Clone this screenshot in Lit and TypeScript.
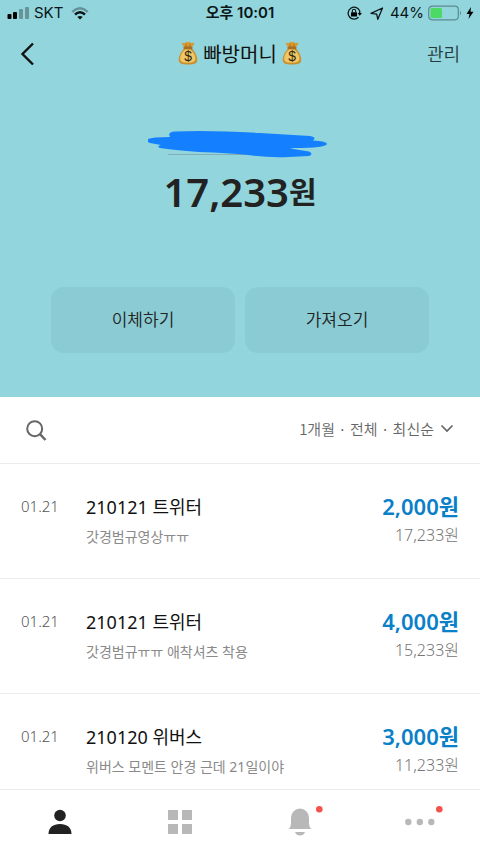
import { LitElement, html, css, svg } from "lit";
import { customElement, property } from "lit/decorators.js";

interface Entry {
  date: string;
  title: string;
  memo: string;
  amount: string;
  balance: string;
}

const entries: Entry[] = [
  { date: "01.21", title: "210121 트위터", memo: "갓경범규영상ㅠㅠ", amount: "2,000원", balance: "17,233원" },
  { date: "01.21", title: "210121 트위터", memo: "갓경범규ㅠㅠ 애착셔츠 착용", amount: "4,000원", balance: "15,233원" },
  { date: "01.21", title: "210120 위버스", memo: "위버스 모멘트 안경 근데 21일이야", amount: "3,000원", balance: "11,233원" },
];

const moneyBag = html`<svg class="bag" width="22" height="24" viewBox="0 0 22 26" aria-hidden="true">
  <path d="M7 7 4 2.500Q6 1.500 7.500 2.500 9-.2 11 1.500 13-.2 14.500 2.500 16.500 1 18 3L15 7Z" fill="#d59a32" />
  <path d="M8.500 3 9.500 7M13.500 3 12.500 7" stroke="#a8701c" stroke-width="1" />
  <path d="M7 8C4 11 1 15 1 20.500 1 24 4 25.500 11 25.500S21 24 21 20.500C21 15 18 11 15 8Z" fill="#c98f30" />
  <path d="M8 9C5 12 2.500 15 2.500 19.500 2.500 23 6 23.500 11 23.500S19 22.500 19 19C19 15 16 11 13 9Z" fill="#efc765" />
  <rect x="6" y="6" width="10" height="3" rx="1.500" fill="#a96d24" />
  <text x="11" y="22" text-anchor="middle" font-family="Liberation Sans, sans-serif" font-size="15" fill="#2f240e">$</text>
</svg>`;

@customElement("status-bar")
class StatusBar extends LitElement {
  static styles = css`
    :host {
      display: grid;
      grid-template-columns: 1fr auto 1fr;
      align-items: center;
      height: 26px;
      padding: 0 6px;
      font: 400 15px/26px Inter, "Noto Sans CJK KR", sans-serif;
      color: #0b1517;
    }
    .group { display: flex; align-items: center; gap: 4px; }
    .end { justify-content: flex-end; }
    .wifi { margin-left: 4px; }
    .time { font-weight: 600; }
    svg { display: block; flex: none; }
  `;
  render() {
    return html`
      <div class="group">
        <svg width="24" height="14" viewBox="0 0 24 14" aria-hidden="true">
          <rect x="1.500" y="8" width="4" height="5" rx="1" />
          <rect x="7" y="6" width="4" height="7" rx="1" />
          <rect x="13" y="3" width="4" height="10" rx="1" opacity=".3" />
          <rect x="19" y="1" width="4" height="12" rx="1" opacity=".3" />
        </svg>
        <span>SKT</span>
        <svg class="wifi" width="18" height="13" viewBox="0 0 18 13" fill="none" stroke="#0b1517" aria-hidden="true">
          <path d="M1.200 5Q9-2.500 16.800 5" stroke-width="2.400" opacity=".35" />
          <path d="M4 7.500Q9 3 14 7.500" stroke-width="2.400" />
          <path d="M6.300 10Q9 7.800 11.700 10L9 12.600Z" fill="#0b1517" stroke="none" />
        </svg>
      </div>
      <span class="time">오후 10:01</span>
      <div class="group end">
        <svg width="15" height="14" viewBox="0 0 15 14" aria-hidden="true">
          <path d="M12.500 4.500A6 6 0 1 0 11.500 11.300M12.700 4.500V8" fill="none" stroke="#0b1517" stroke-width="1.300" />
          <path d="M10.500 7H15L12.700 9.700Z" />
          <rect x="4" y="6.200" width="6" height="4.300" rx=".6" />
          <path d="M5.300 6.500V5a1.700 1.700 0 0 1 3.400 0V6.500" fill="none" stroke="#0b1517" stroke-width="1.100" />
        </svg>
        <svg width="20" height="13" viewBox="0 0 20 13" aria-hidden="true">
          <path d="M5 6.300 16.500 1 11.800 12.300 10.700 7.200Z" fill="none" stroke="#0b1517" stroke-width="1.300" stroke-linejoin="round" />
        </svg>
        <span>44%</span>
        <svg width="34" height="16" viewBox="0 0 34 16" aria-hidden="true">
          <rect x=".7" y="1.200" width="29.600" height="13.600" rx="3.500" fill="none" stroke="#5c8a90" stroke-width="1.200" />
          <rect x="2.500" y="3" width="11.500" height="10" rx="1.500" fill="#4cd964" />
          <path d="M32 5.500Q34 8 32 10.500Z" fill="#5c8a90" />
        </svg>
        <svg width="8" height="12" viewBox="0 0 8 12" aria-hidden="true"><path d="M5 0 .5 7H3.500L2.500 12 7.500 4.700H4.500Z" /></svg>
      </div>
    `;
  }
}

@customElement("entry-row")
class EntryRow extends LitElement {
  @property({ attribute: false }) entry!: Entry;
  static styles = css`
    :host {
      display: grid;
      grid-template-columns: 65px 1fr auto;
      padding: 28px 21px 26px;
      border-top: 1px solid #ececec;
      line-height: 30px;
      color: #757575;
    }
    .date { font-size: 15px; font-weight: 300; line-height: 28px; color: #555; }
    .title { font-size: 18px; color: #111; }
    .memo { font-size: 14px; color: #8a8a8a; }
    .money { text-align: right; line-height: 29px; }
    .amount { font-size: 22px; font-weight: 600; color: #0a80c8; }
    .balance { font-size: 16px; font-weight: 300; }
  `;
  render() {
    const e = this.entry;
    return html`
      <span class="date">${e.date}</span>
      <div>
        <div class="title">${e.title}</div>
        <div class="memo">${e.memo}</div>
      </div>
      <div class="money">
        <div class="amount">${e.amount}</div>
        <div class="balance">${e.balance}</div>
      </div>
    `;
  }
}

@customElement("tab-bar")
class TabBar extends LitElement {
  static styles = css`
    nav {
      display: grid;
      grid-template-columns: repeat(4, 1fr);
      height: 64px;
      border-top: 1px solid #ebebeb;
      background: #fff;
    }
    button {
      display: grid;
      place-items: center;
      padding: 0;
      border: 0;
      background: none;
      color: #b8b8b8;
    }
    .active { color: #222; }
  `;
  private tab(label: string, shape: unknown, active = false) {
    return html`<button class=${active ? "active" : ""} aria-label=${label}>
      <svg width="48" height="36" viewBox="0 0 48 36" fill="currentColor">${shape}</svg>
    </button>`;
  }
  render() {
    const dot = svg`<circle cx="43.300" cy="5.300" r="3.300" fill="#f5544c" />`;
    return html`<nav>
      ${this.tab("홈", svg`<circle cx="24" cy="11.500" r="5.800" /><path d="M12.500 30C12.500 23.500 17 20 24 20S35.500 23.500 35.500 30Z" />`, true)}
      ${this.tab("서비스", svg`<path d="M12 6h10v10H12zM26 6h10v10H26zM12 20h10v10H12zM26 20h10v10H26z" />`)}
      ${this.tab("알림", svg`<path d="M12.700 25Q15 22.500 15 20V13.500A9 9 0 0 1 33 13.500V20Q33 22.500 35.300 25ZM19 28H29Q27.500 31.500 24 31.500T19 28Z" />${dot}`)}
      ${this.tab("더보기", svg`<circle cx="12.300" cy="18" r="3.200" /><circle cx="23.800" cy="18" r="3.200" /><circle cx="35.300" cy="18" r="3.200" />${dot}`)}
    </nav>`;
  }
}

@customElement("app-root")
class AppRoot extends LitElement {
  static styles = css`
    :host {
      display: flex;
      flex-direction: column;
      height: 100vh;
      background: #fff;
      font-family: "Noto Sans", "Noto Sans CJK KR", sans-serif;
      color: #222;
    }
    button {
      padding: 0;
      border: 0;
      background: none;
      font: inherit;
      color: inherit;
    }
    svg { display: block; flex: none; }
    main {
      flex: 1;
      min-height: 0;
      overflow-y: auto;
      scrollbar-width: none;
    }
    .hero { background: #92d5dc; }
    .bar {
      display: grid;
      grid-template-columns: 1fr auto 1fr;
      align-items: center;
      height: 56px;
      padding: 0 20px;
    }
    .back { justify-self: start; }
    .manage { justify-self: end; padding-bottom: 2px; font-size: 18px; font-weight: 350; color: #263b3f; }
    h1 {
      display: flex;
      align-items: center;
      gap: 4px;
      margin: 0;
      padding-bottom: 2px;
      font-size: 20px;
      font-weight: 400;
      color: #111;
    }
    .summary {
      display: flex;
      flex-direction: column;
      align-items: center;
      padding-top: 46px;
    }
    .total { display: flex; align-items: center; line-height: 62px; font-weight: 600; font-size: 40px; }
    .unit { font-size: 30px; }
    .actions {
      display: grid;
      grid-template-columns: 1fr 1fr;
      gap: 10px;
      padding: 64px 51px 44px;
    }
    .action {
      height: 66px;
      padding-bottom: 4px;
      border-radius: 13px;
      background: #8bcbd3;
      font-size: 17px;
      font-weight: 350;
    }
    .tools {
      display: flex;
      align-items: center;
      justify-content: space-between;
      height: 66px;
      padding: 0 26px;
      color: #666;
    }
    .filter {
      display: flex;
      align-items: center;
      gap: 6px;
      padding-bottom: 4px;
      font-family: "Noto Sans CJK KR", sans-serif;
      font-size: 15px;
      font-weight: 350;
    }
  `;
  render() {
    return html`
      <main>
        <header class="hero">
          <status-bar></status-bar>
          <div class="bar">
            <button class="back" aria-label="뒤로">
              <svg width="16" height="24" viewBox="0 0 16 24" fill="none" stroke="#111" stroke-width="2.400"><path d="M13 1.500 2.500 12 13 22.500" /></svg>
            </button>
            <h1>${moneyBag}<span>빠방머니</span>${moneyBag}</h1>
            <button class="manage">관리</button>
          </div>
          <div class="summary">
            <svg width="184" height="33" viewBox="4 0 184 33" aria-hidden="true">
              <path d="M24 26.500H155" stroke="#83aeb3" stroke-width="1" />
              <path d="M4 11Q8 9 26 9Q23 4 31 3.500Q65 2 116 5L166 8Q173 9 169 12.500Q183 13 183 16Q181 20 151 20L146 20.500 165 23.500Q170 26 165 28L145 29Q125 30 104 27 84 25 55 24 29 22 16 20 12 18 17 17L6 15Q1 13 4 11Z" fill="#1480ff" />
            </svg>
            <div class="total"><span>17,233</span><span class="unit">원</span></div>
          </div>
          <div class="actions">
            <button class="action">이체하기</button>
            <button class="action">가져오기</button>
          </div>
        </header>
        <div class="tools">
          <button aria-label="검색">
            <svg width="22" height="24" viewBox="0 0 22 24" fill="none" stroke="#666" stroke-width="2"><circle cx="8.700" cy="10.700" r="7.500" /><path d="M14 16.200 19.500 22" stroke-width="2.400" /></svg>
          </button>
          <button class="filter">
            <span>1개월 · 전체 · 최신순</span>
            <svg width="14" height="10" viewBox="0 0 14 10" fill="none" stroke="#666" stroke-width="1.700"><path d="M1.500 2.500 7 8 12.500 2.500" /></svg>
          </button>
        </div>
        ${entries.map((e) => html`<entry-row .entry=${e}></entry-row>`)}
      </main>
      <tab-bar></tab-bar>
    `;
  }
}
